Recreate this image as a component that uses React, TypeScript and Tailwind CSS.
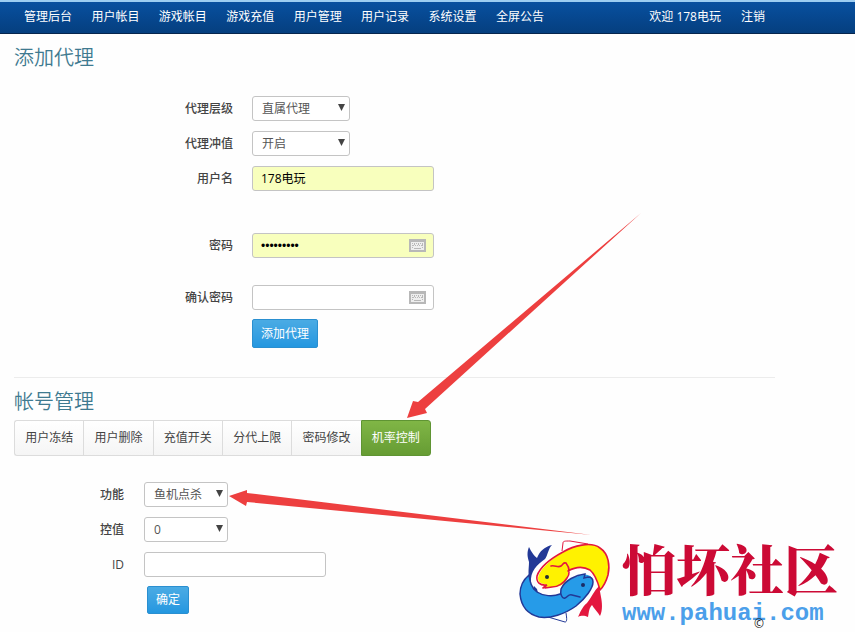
import { useState, type ReactNode } from 'react';

const NAV_LINKS = ['管理后台', '用户帐目', '游戏帐目', '游戏充值', '用户管理', '用户记录', '系统设置', '全屏公告'];
const TABS = ['用户冻结', '用户删除', '充值开关', '分代上限', '密码修改', '机率控制'];

const fieldBase = 'h-[25px] rounded-[3px] border border-[#c4c4c4] text-xs outline-none';
const primaryButton =
  'rounded-[2px] border border-[#2a8fd0] bg-linear-to-b from-[#4aabe4] to-[#2397e0] text-xs text-white';

function Row({ id, label, labelWidth, children }: { id: string; label: string; labelWidth: string; children: ReactNode }) {
  return (
    <div className="flex items-center">
      <label htmlFor={id} className={`${labelWidth} shrink-0 text-right font-medium`}>
        {label}
      </label>
      {children}
    </div>
  );
}

function Select({ id, width, options }: { id: string; width: string; options: string[] }) {
  return (
    <div className={`relative ${width}`}>
      <select id={id} className={`${fieldBase} block w-full appearance-none bg-white pt-px pl-[9px] text-[#555]`}>
        {options.map((option) => (
          <option key={option}>{option}</option>
        ))}
      </select>
      <svg viewBox="0 0 7 7" className="pointer-events-none absolute top-2 right-[5px] h-[7px] w-[7px] fill-[#444]">
        <path d="M0 0h7L3.5 7z" />
      </svg>
    </div>
  );
}

function KeyboardIcon() {
  return (
    <svg viewBox="0 0 17 13" className="pointer-events-none absolute top-[6px] right-2 h-[13px] w-[17px]">
      <path fill="#b8b8b8" d="M0 0h17v13H0z" />
      <path fill="#eee" d="M2 3h13v8H2z" />
      <path
        fill="#b8b8b8"
        d="M3 4h1v1H3zM5 4h1v2H5zM7 4h1v1H7zM9 4h1v2H9zM11 4h1v1h-1zM13 4h1v2h-1zM3 6h2v1H3zM6 6h1v1H6zM8 6h1v1H8zM10 6h1v1h-1zM12 6h2v1h-2zM3 8h1v1H3zM5 9h7v1H5zM13 8h1v1h-1z"
      />
    </svg>
  );
}

function PasswordInput({ id, defaultValue, className }: { id: string; defaultValue?: string; className: string }) {
  return (
    <div className="relative w-[182px]">
      <input
        id={id}
        type="password"
        defaultValue={defaultValue}
        className={`${fieldBase} ${className} block w-full pr-8 pl-2 font-['Liberation_Sans',sans-serif] text-black`}
      />
      <KeyboardIcon />
    </div>
  );
}

function FishLogo() {
  return (
    <svg viewBox="0 0 90 84" className="h-[84px] w-[90px] shrink-0 overflow-visible">
      {/* yellow fish */}
      <path fill="#fff" stroke="#e3173e" d="M43 11 44 3C44 1 46 1 51 1L69 4" />
      <path
        fill="#fff200"
        d="M19 38C20 31 28 22 44 12C54 6 72 1 81 8C90 14 91 26 89 35C87 42 84 47 81 50C79 43 77 35 71 30C64 26 56 27 49 31C50 40 45 47 34 47C29 47 26 48 24 46L27 44C22 44 19 42 19 38Z"
      />
      <path
        fill="none"
        stroke="#e3173e"
        strokeWidth="1.6"
        strokeLinecap="round"
        d="M24 48 28 45C21 46 17 42 18 36C21 27 31 19 44 12C54 6 72 1 81 8C90 14 91 26 89 35C87 42 84 47 81 50C79 43 77 35 71 30C64 26 56 27 49 31M32 26C36 25 39 28 42 26C45 24 44 22 47 23C51 28 51 34 48 38C45 43 39 47 33 47L26 48"
      />
      <path
        fill="#e3173e"
        d="M80 46C75 51 72 58 68 63C63 67 61 73 59 77C63 75 66 76 69 77C70 72 70 68 73 65C75 69 79 72 81 76C84 70 83 62 82 57Z"
      />
      {/* blue fish */}
      <path fill="#fff" stroke="#223896" d="M29 77 46 82C48 82 48 79 47 73" />
      <path
        fill="#269be8"
        d="M10 35C4 40 1 47 1 54C2 65 8 74 20 77C31 79 46 74 57 66C67 58 74 48 74 42C74 36 69 34 64 35C55 36 45 42 42 49L41 54C34 57 24 56 18 52C12 48 11 41 10 35Z"
      />
      <path
        fill="none"
        stroke="#223896"
        strokeWidth="1.5"
        strokeLinecap="round"
        d="M10 35C4 40 1 47 1 54C2 65 8 74 20 77C31 79 46 74 57 66C67 58 74 48 74 42C74 39 72 37 69 37L65 38L66 34C57 35 46 40 42 49C41 54 43 59 46 58C49 57 49 54 53 55L61 57M41 54C34 57 24 56 18 52C12 48 11 41 10 35"
      />
      <path
        fill="#223896"
        d="M12 43C8 35 10 29 10 22C8 16 8 12 10 7C12 11 15 16 18 18C21 11 25 7 33 5C29 9 29 15 26 19C18 25 11 31 12 43ZM15 46 18 49 19 53 14 49Z"
      />
      <circle cx="28" cy="37" r="2" fill="#232b33" />
      <circle cx="64" cy="45" r="2" fill="#1b2c66" />
    </svg>
  );
}

function Annotations() {
  return (
    <svg viewBox="0 0 855 632" className="pointer-events-none absolute top-0 left-0 h-[632px] w-[855px] fill-[#ed3f3f]">
      <path d="M641 213 425 409 427 413 407 418 413 401 418 402Z" />
      <path d="M592 535 247 502 246 506 229 496 247 490 247 493Z" />
    </svg>
  );
}

export default function App() {
  const [activeTab, setActiveTab] = useState('机率控制');

  return (
    <div className="relative min-h-screen overflow-hidden bg-[#fefefe] font-['Open_Sans','Noto_Sans_CJK_SC',sans-serif] text-xs text-[#444]">
      <nav className="flex h-[34px] items-center border-t-2 border-b border-t-[#9ccdf2] border-b-[#06264d] bg-linear-to-b from-[#0850a0] to-[#053f7f] pr-[90px] pb-px pl-6 text-white">
        <div className="flex w-[520px] shrink-0 justify-between whitespace-nowrap">
          {NAV_LINKS.map((item) => (
            <a key={item} href="#">
              {item}
            </a>
          ))}
        </div>
        <div className="ml-auto flex gap-5 whitespace-nowrap">
          <a href="#">欢迎 178电玩</a>
          <a href="#">注销</a>
        </div>
      </nav>

      <main className="pr-20 pl-[14px]">
        <section className="border-b border-[#ececec] pt-2 pb-[29px]">
          <h1 className="text-xl leading-8 font-[350] text-[#3f7a90]">添加代理</h1>
          <form className="mt-[22px]" onSubmit={(e) => e.preventDefault()}>
            <div className="flex flex-col gap-[10px]">
              <Row id="level" label="代理层级" labelWidth="w-[219px] mr-[19px]">
                <Select id="level" width="w-[98px]" options={['直属代理', '普通代理']} />
              </Row>
              <Row id="recharge" label="代理冲值" labelWidth="w-[219px] mr-[19px]">
                <Select id="recharge" width="w-[98px]" options={['开启', '关闭']} />
              </Row>
              <Row id="username" label="用户名" labelWidth="w-[219px] mr-[19px]">
                <input
                  id="username"
                  type="text"
                  defaultValue="178电玩"
                  className={`${fieldBase} w-[182px] bg-[#f8ffbd] px-2 pb-[2px] text-black`}
                />
              </Row>
            </div>
            <div className="mt-[42px] flex flex-col gap-[27px]">
              <Row id="password" label="密码" labelWidth="w-[219px] mr-[19px]">
                <PasswordInput id="password" defaultValue="123456789" className="bg-[#f8ffbd]" />
              </Row>
              <Row id="confirm" label="确认密码" labelWidth="w-[219px] mr-[19px]">
                <PasswordInput id="confirm" className="bg-white" />
              </Row>
            </div>
            <button type="submit" className={`${primaryButton} mt-[9px] ml-[238px] block h-[29px] px-2`}>
              添加代理
            </button>
          </form>
        </section>

        <section className="pt-2">
          <h2 className="text-xl leading-8 font-[350] text-[#3f7a90]">帐号管理</h2>
          <div className="mt-[2px] flex w-[417px]">
            {TABS.map((tab) => (
              <button
                key={tab}
                type="button"
                onClick={() => setActiveTab(tab)}
                className={`h-9 flex-1 border-y border-l first:rounded-l-[3px] last:rounded-r-[3px] last:border-r ${
                  tab === activeTab
                    ? 'border-[#5f9433] bg-linear-to-b from-[#80b646] to-[#669c33] text-white'
                    : 'border-[#dcdcdc] bg-linear-to-b from-white to-[#f5f5f5] text-[#444]'
                }`}
              >
                {tab}
              </button>
            ))}
          </div>
          <form className="mt-[26px]" onSubmit={(e) => e.preventDefault()}>
            <div className="flex flex-col gap-[10px]">
              <Row id="action" label="功能" labelWidth="w-[110px] mr-[20px]">
                <Select id="action" width="w-[84px]" options={['鱼机点杀', '鱼机放水']} />
              </Row>
              <Row id="value" label="控值" labelWidth="w-[110px] mr-[20px]">
                <Select id="value" width="w-[84px]" options={['0', '1', '2']} />
              </Row>
              <Row id="player" label="ID" labelWidth="w-[110px] mr-[20px]">
                <input id="player" type="text" className={`${fieldBase} w-[182px] bg-white px-2`} />
              </Row>
            </div>
            <button type="submit" className={`${primaryButton} mt-[9px] ml-[133px] block h-7 px-2`}>
              确定
            </button>
          </form>
        </section>
      </main>

      <Annotations />

      <div className="absolute top-[540px] left-[519px] flex items-start gap-[13px]">
        <FishLogo />
        <div className="whitespace-nowrap">
          <div className="font-['Noto_Serif_CJK_SC','Noto_Sans_CJK_SC',sans-serif] text-[54px] leading-[56px] font-black text-[#cc0a35]">
            怕坏社区
          </div>
          <div className="mt-1 font-['Liberation_Mono',monospace] text-2xl leading-7 font-bold text-[#4b9fea]">www.pahuai.com</div>
        </div>
      </div>
      <span className="absolute top-[616px] left-[754px] text-xs leading-4 text-[#222]">©</span>
    </div>
  );
}
